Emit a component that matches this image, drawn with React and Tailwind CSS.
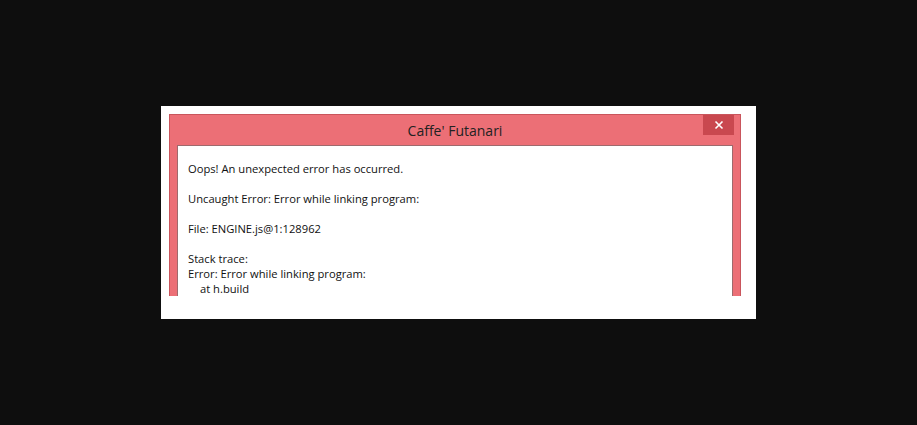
export default function App() {
  const font = { fontFamily: '"Open Sans", "Noto Sans", sans-serif' };
  return (
    <div className="w-[917px] h-[425px] bg-[#0e0e0e] pt-[106px] pl-[161px]" style={font}>
      <div className="w-[595px] h-[213px] bg-white pt-[8px] pl-[8px]">
        <div className="w-[572px] h-[182px] bg-[#ec6f76] border border-[#c9555c] border-b-0 flex flex-col overflow-hidden">
          <div className="h-[30px] flex items-start relative shrink-0">
            <div className="flex-1 text-center text-[14px] leading-[31px] text-[#222]">Caffe' Futanari</div>
            <div className="absolute right-[6px] top-0 w-[31px] h-[20px] bg-[#c9484f] flex items-center justify-center">
              <svg width="10" height="10" viewBox="0 0 10 10">
                <path d="M1.5 1.5 L8.5 8.5 M8.5 1.5 L1.5 8.5" stroke="white" strokeWidth="1.6" />
              </svg>
            </div>
          </div>
          <div className="flex-1 mx-[7px] bg-white border border-[#9e6a6d] border-b-0 pl-[10px] pt-[15px] text-[11.2px] leading-[15px] text-[#111]">
            <div>Oops! An unexpected error has occurred.</div>
            <div className="h-[15px]"></div>
            <div>Uncaught Error: Error while linking program:</div>
            <div className="h-[15px]"></div>
            <div>File: ENGINE.js@1:128962</div>
            <div className="h-[15px]"></div>
            <div>Stack trace:</div>
            <div>Error: Error while linking program:</div>
            <div className="pl-[12px]">at h.build</div>
          </div>
        </div>
      </div>
    </div>
  );
}
